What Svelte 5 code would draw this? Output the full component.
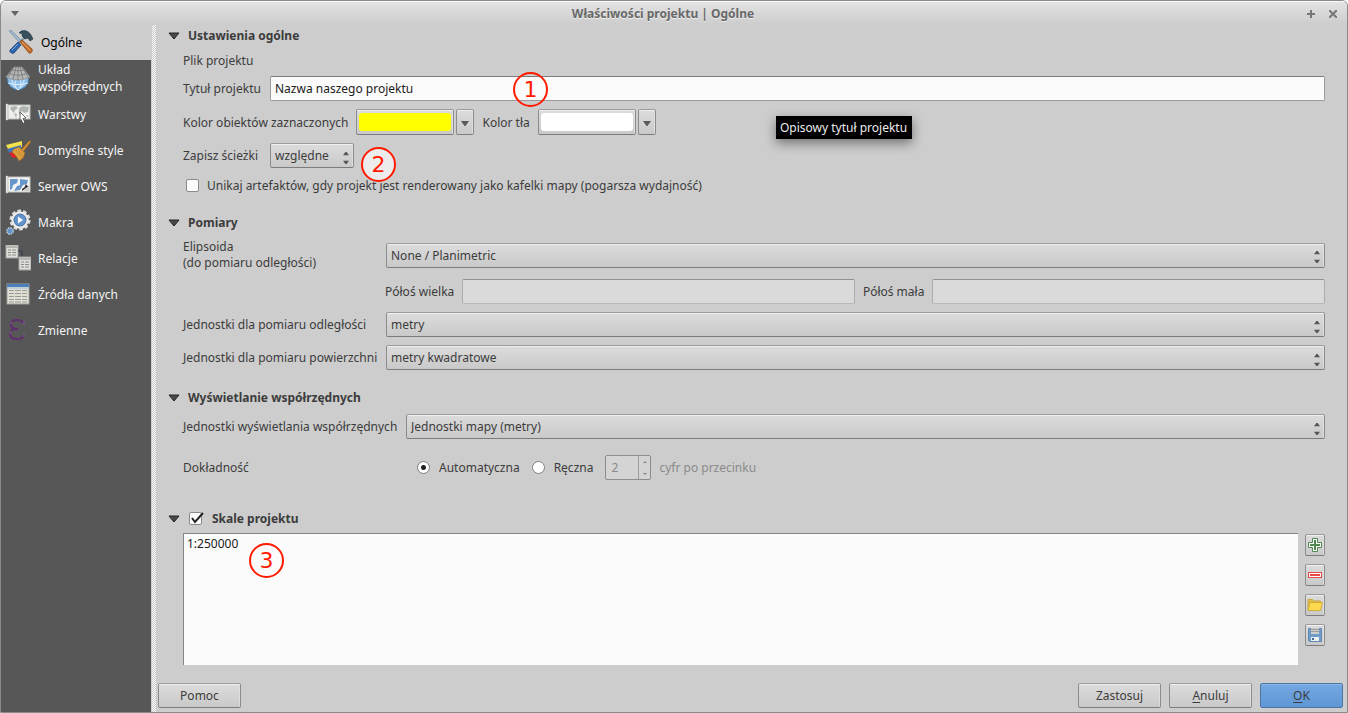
<script lang="ts">
	interface Page {
		id: string;
		label: string;
	}

	const pages: Page[] = [
		{ id: 'general', label: 'Ogólne' },
		{ id: 'crs', label: 'Układ współrzędnych' },
		{ id: 'layers', label: 'Warstwy' },
		{ id: 'styles', label: 'Domyślne style' },
		{ id: 'ows', label: 'Serwer OWS' },
		{ id: 'macros', label: 'Makra' },
		{ id: 'relations', label: 'Relacje' },
		{ id: 'sources', label: 'Źródła danych' },
		{ id: 'variables', label: 'Zmienne' }
	];

	let current = $state('general');
	let title = $state('Nazwa naszego projektu');
	let avoidArtifacts = $state(false);
	let useScales = $state(true);
	let precision = $state('auto');
	let digits = $state('2');
</script>

{#snippet spinArrows()}
	<svg class="spin-arrows" width="6" height="12" viewBox="0 0 6 12" aria-hidden="true">
		<path d="M0 3.300 2.400 0h1.200L6 3.300zM0 8.700h6L3.600 12H2.400z" fill="currentColor" />
	</svg>
{/snippet}

{#snippet downArrow()}
	<svg width="8" height="5" viewBox="0 0 8 5" aria-hidden="true">
		<path d="M0 0h8L4.500 5h-1z" fill="#5b5b5b" />
	</svg>
{/snippet}

{#snippet fold()}
	<svg class="fold" width="12" height="8" viewBox="0 0 12 8" aria-hidden="true">
		<path d="M1 1h10L6 7z" fill="#4a4a4a" stroke="#222" stroke-width="1" stroke-linejoin="round" />
	</svg>
{/snippet}

{#snippet combo(id: string, value: string)}
	<div class="combo">
		<select {id}>
			<option>{value}</option>
		</select>
		{@render spinArrows()}
	</div>
{/snippet}

{#snippet tableSheet(x: number, y: number)}
	<g transform="translate({x} {y})">
		<rect width="12" height="13" fill="#dededa" stroke="#a3a39f" stroke-width="1" />
		<rect x="1" y="1" width="10" height="2" fill="#b5b5b0" />
		<path d="M2 5h3M6 5h4M2 7.500h3M6 7.500h4M2 10h3M6 10h4" stroke="#8b8b86" />
	</g>
{/snippet}

{#snippet pageIcon(id: string)}
	<svg class="page-icon" width="26" height="26" viewBox="0 0 26 26" aria-hidden="true">
		{#if id === 'general'}
			<path d="M1 2 3 1l10 10-2 2z" fill="#9fb8cf" stroke="#6d8296" stroke-width=".6" />
			<path d="M10 15 19 6" stroke="#8a949c" stroke-width="2.400" />
			<path d="M2 21 10 13l3 3-7 8c-2 1-5-1-4-3z" fill="#2f66ad" stroke="#1d447b" stroke-width=".8" />
			<path d="m4 21 6-6" stroke="#80acdf" stroke-width="1" />
			<path d="m12 13 2-2 10 9c1 2-1 5-3 4z" fill="#c3702f" stroke="#8a4717" stroke-width=".8" />
			<path d="m14 13 8 8" stroke="#e9a46a" stroke-width="1" />
			<path d="M11 4c3-4 9-3 12 2l2 4-3 2-2-3-3 1-3-3c1-2-1-3-3-3z" fill="#38505e" stroke="#1f313c" stroke-width=".6" />
		{:else if id === 'crs'}
			<circle cx="13" cy="14" r="10.500" fill="#8dc0ec" stroke="#4b86bd" />
			<path d="M13 13c-4 3-4 8 0 12 4-4 4-9 0-12zM3 18c6 2 14 2 20 0M7 14c0 5 2 8 6 11 4-3 6-6 6-11" fill="none" stroke="#dff0fc" stroke-width="1" />
			<path d="M9 2h8l8 10c-7 4-17 4-24 0z" fill="#b4b5b5" stroke="#8a8c8c" stroke-width=".8" />
			<path d="M7 5c4 1 8 1 12 0M4 8c5 3 13 3 18 0M11 2 8 14M15 2l3 12M13 2v13M9 2 3 12M17 2l6 10" fill="none" stroke="#6e7070" stroke-width=".7" />
		{:else if id === 'layers'}
			<path d="M1 3h2v16H1z" fill="#fff" stroke="#aaa" stroke-width=".5" />
			<rect x="3" y="4" width="22" height="14" fill="#efefed" stroke="#bcbcb8" />
			<path d="m5 6 6-1 2 2-3 2-1 3-3-3zM9 12l3 1-1 4zM14 7l4-2 6 1-1 5-4 1-2-2-3 3zM21 14l3 1-2 1z" fill="#aeb4ae" />
			<path d="m15 11 6 6-3 .5 2 4-2 1-2-4-1 1z" fill="#fff" stroke="#444" stroke-width=".8" />
		{:else if id === 'styles'}
			<path d="m1 8 16-4v6L4 14z" fill="#f4e04a" />
			<path d="m2 12 14-4v6L6 18z" fill="#3f74b8" />
			<path d="m4 16 12-3v6L8 21z" fill="#df2323" />
			<path d="m16 13 8-9c2-1 2 0 1 2l-7 9z" fill="#d89336" stroke="#8b5919" stroke-width=".6" />
			<path d="m9 12 5-2 6 6-2 5-4 3c-2-4-4-7-7-9z" fill="#dda13d" stroke="#a66d22" stroke-width=".7" />
			<path d="m11 13 6 8M13 12l5 7M15 11l4 5" stroke="#b37a2a" stroke-width=".6" />
		{:else if id === 'ows'}
			<path d="M1 3h2v17H1z" fill="#fff" stroke="#aaa" stroke-width=".5" />
			<rect x="3" y="4" width="22" height="15" fill="#f4f4f4" stroke="#c4c4c0" />
			<path d="m5 6 8 0-1 4-4 2-1 4-2 1zM15 6l8 1-1 4-4 1-3 5-6 1 3-5 3-1z" fill="#6797ca" />
			<path d="M17 18c0-3 1-3 2-3l2-4c1 2 2 2 3 2z" fill="#333" />
			<path d="M19 18c1-2 3-3 5-4v4z" fill="#c9c9c9" />
		{:else if id === 'macros'}
			<circle cx="15" cy="11" r="9" fill="none" stroke="#dcdcdc" stroke-width="3" stroke-dasharray="3.500 2.155" />
			<circle cx="15" cy="11" r="7.500" fill="#6493cb" stroke="#ececec" stroke-width="2.400" />
			<circle cx="15" cy="11" r="6" fill="none" stroke="#3f689c" stroke-width=".7" />
			<path d="m13 7.500 5 3.500-5 3.500z" fill="#fff" />
			<circle cx="5" cy="22" r="3.200" fill="#6493cb" stroke="#b9c5d0" stroke-width="1.500" stroke-dasharray="1.600 .9" />
		{:else if id === 'relations'}
			{@render tableSheet(1, 0)}
			<path d="M13 6h4v6" fill="none" stroke="#303c50" />
			{@render tableSheet(14, 12)}
		{:else if id === 'sources'}
			<rect x="2" y="3" width="22" height="20" fill="#dfdfd6" stroke="#a1a19b" />
			<rect x="2" y="3" width="22" height="3" fill="#4c80bd" />
			<path d="M2 7h22" stroke="#9fbbdc" />
			<path d="M4 9.500h5M10 9.500h6M17 9.500h5M4 12.500h5M10 12.500h6M17 12.500h5M4 15.500h5M10 15.500h6M17 15.500h5M4 18.500h5M10 18.500h6M17 18.500h5M4 21h5M10 21h6M17 21h5" stroke="#9a9a92" />
		{:else}
			<path d="M19 7c-1-3-4-4-7-4-4 0-6 2-6 4.500s2 4.500 6 4.500h1M12 12c-4 0-7 2-7 5s3 5 8 5c3 0 5-1 6-4" fill="none" stroke="#5f2f70" stroke-width="2.200" />
			<path d="M19 4v4M19 17v3M7 5 6 7M6 14l-1 3" stroke="#8a6397" stroke-width="1" />
		{/if}
	</svg>
{/snippet}

<div class="dialog">
	<header class="titlebar">
		<button type="button" class="frame-button" aria-label="Menu okna">
			<svg width="8" height="5" viewBox="0 0 8 5"><path d="M0 0h8L4 5z" fill="#666" /></svg>
		</button>
		<h1>Właściwości projektu | Ogólne</h1>
		<button type="button" class="frame-button" aria-label="Maksymalizuj">
			<svg width="8" height="8" viewBox="0 0 8 8"><path d="M4 0v8M0 4h8" stroke="#777" stroke-width="2" /></svg>
		</button>
		<button type="button" class="frame-button" aria-label="Zamknij">
			<svg width="8" height="8" viewBox="0 0 8 8"><path d="m0 0 8 8M8 0 0 8" stroke="#777" stroke-width="2" /></svg>
		</button>
	</header>

	<div class="main">
		<nav class="sidebar">
			{#each pages as page (page.id)}
				<button
					type="button"
					class="page"
					class:active={current === page.id}
					onclick={() => (current = page.id)}
				>
					{@render pageIcon(page.id)}
					<span>{page.label}</span>
				</button>
			{/each}
		</nav>
		<div class="splitter"></div>

		<div class="content">
			<form class="groups" onsubmit={(event) => event.preventDefault()}>
				<section>
					<h2>{@render fold()}Ustawienia ogólne</h2>
					<div class="body">
						<div class="row text-row">Plik projektu</div>
						<div class="row">
							<label class="short" for="title">Tytuł projektu</label>
							<input id="title" class="field" type="text" bind:value={title} />
						</div>
						<div class="row">
							<span>Kolor obiektów zaznaczonych</span>
							<div class="color-picker">
								<button type="button" class="color" aria-label="Kolor obiektów zaznaczonych">
									<span class="swatch yellow"></span>
								</button>
								<button type="button" class="color-menu" aria-label="Menu koloru">
									{@render downArrow()}
								</button>
							</div>
							<span>Kolor tła</span>
							<div class="color-picker">
								<button type="button" class="color" aria-label="Kolor tła">
									<span class="swatch"></span>
								</button>
								<button type="button" class="color-menu" aria-label="Menu koloru tła">
									{@render downArrow()}
								</button>
							</div>
						</div>
						<div class="row paths">
							<label class="short" for="paths">Zapisz ścieżki</label>
							{@render combo('paths', 'względne')}
						</div>
						<label class="row check-row">
							<span class="check">
								<input type="checkbox" bind:checked={avoidArtifacts} />
								{#if avoidArtifacts}{@render tick()}{/if}
							</span>
							Unikaj artefaktów, gdy projekt jest renderowany jako kafelki mapy (pogarsza wydajność)
						</label>
					</div>
				</section>

				<section>
					<h2>{@render fold()}Pomiary</h2>
					<div class="body">
						<div class="row">
							<label class="medium two-line" for="ellipsoid">Elipsoida<br />(do pomiaru odległości)</label>
							{@render combo('ellipsoid', 'None / Planimetric')}
						</div>
						<div class="row axes">
							<label for="semi-major">Półoś wielka</label>
							<input id="semi-major" class="field" type="text" disabled />
							<label for="semi-minor">Półoś mała</label>
							<input id="semi-minor" class="field" type="text" disabled />
						</div>
						<div class="row">
							<label class="medium" for="distance">Jednostki dla pomiaru odległości</label>
							{@render combo('distance', 'metry')}
						</div>
						<div class="row">
							<label class="medium" for="area">Jednostki dla pomiaru powierzchni</label>
							{@render combo('area', 'metry kwadratowe')}
						</div>
					</div>
				</section>

				<section class="coordinates">
					<h2>{@render fold()}Wyświetlanie współrzędnych</h2>
					<div class="body">
						<div class="row">
							<label class="long" for="display">Jednostki wyświetlania współrzędnych</label>
							{@render combo('display', 'Jednostki mapy (metry)')}
						</div>
						<div class="row precision">
							<span class="long">Dokładność</span>
							<label class="radio">
								<input type="radio" name="precision" value="auto" bind:group={precision} />
								Automatyczna
							</label>
							<label class="radio">
								<input type="radio" name="precision" value="manual" bind:group={precision} />
								Ręczna
							</label>
							<div class="spin" class:off={precision === 'auto'}>
								<input
									id="digits"
									type="text"
									inputmode="numeric"
									bind:value={digits}
									disabled={precision === 'auto'}
								/>
								<span class="steps">
									<svg width="4" height="14" viewBox="0 0 4 14" aria-hidden="true">
										<path d="M0 2 2 0l2 2zM0 12h4l-2 2z" fill="currentColor" />
									</svg>
								</span>
							</div>
							<label class="digits" for="digits">cyfr po przecinku</label>
						</div>
					</div>
				</section>

				<section class="scales">
					<h2>
						{@render fold()}
						<label>
							<span class="check">
								<input type="checkbox" bind:checked={useScales} />
								{#if useScales}{@render tick()}{/if}
							</span>
							Skale projektu
						</label>
					</h2>
					<div class="scale-body">
						<ul class="scale-list">
							<li>1:250000</li>
						</ul>
						<div class="tools">
							<button type="button" aria-label="Dodaj skalę">
								<svg width="16" height="16" viewBox="0 0 16 16">
									<path d="M5.500 1.500h5v4h4v5h-4v4h-5v-4h-4v-5h4z" fill="#fff" stroke="#4f8a4f" />
									<path d="M8 3v10M3 8h10" stroke="#4f8a4f" stroke-width="2" />
								</svg>
							</button>
							<button type="button" aria-label="Usuń skalę">
								<svg width="16" height="16" viewBox="0 0 16 16">
									<rect x="1.500" y="5.500" width="13" height="5" fill="#fff" stroke="#e84a4a" />
									<path d="M3 8h10" stroke="#e84a4a" stroke-width="2" />
								</svg>
							</button>
							<button type="button" aria-label="Wczytaj skale">
								<svg width="16" height="16" viewBox="0 0 16 16">
									<path d="M1 13V2.500h4.500l1 1.500h7v3" fill="#e2bd48" stroke="#c8a640" />
									<path d="m1 13.500 2-8h12.500l-2 8z" fill="#fcd94f" stroke="#d3ac38" />
								</svg>
							</button>
							<button type="button" aria-label="Zapisz skale">
								<svg width="16" height="16" viewBox="0 0 16 16">
									<path d="M1.500 1.500h13v13h-12l-1-1z" fill="#6f9bc9" stroke="#6389b3" />
									<rect x="4" y="1" width="8" height="6" fill="#cfcfcf" />
									<path d="M4 2.500h8M4 4.500h8" stroke="#9c9c9c" />
									<rect x="4" y="10" width="8" height="4" fill="#eee" />
									<rect x="5" y="11" width="2" height="2" fill="#456b96" />
								</svg>
							</button>
						</div>
					</div>
				</section>
			</form>

			<footer>
				<button type="button" class="action">Pomoc</button>
				<div class="confirm">
					<button type="button" class="action">Zastosuj</button>
					<button type="button" class="action"><u>A</u>nuluj</button>
					<button type="button" class="action primary"><u>O</u>K</button>
				</div>
			</footer>
		</div>
	</div>

	<div class="tooltip" role="tooltip">Opisowy tytuł projektu</div>
	<span class="marker one">1</span>
	<span class="marker two">2</span>
	<span class="marker three">3</span>
</div>

{#snippet tick()}
	<svg width="15" height="13" viewBox="0 0 15 13" aria-hidden="true">
		<path d="m3 6 3 4L14 1" fill="none" stroke="#222" stroke-width="2" />
	</svg>
{/snippet}

<style>
	:global(body) {
		background: #fff;
	}

	.dialog {
		position: relative;
		display: flex;
		flex-direction: column;
		box-sizing: border-box;
		min-height: 100vh;
		border: 1px solid #8a8a8a;
		border-radius: 6px 6px 0 0;
		overflow: hidden;
		background: #cdcdcd;
		color: #3c3c3c;
		font-family: 'Noto Sans', sans-serif;
		font-size: 12px;
		line-height: 17px;
	}

	.dialog :is(button, input, select) {
		box-sizing: border-box;
		margin: 0;
		color: inherit;
		font: inherit;
	}

	.titlebar {
		display: flex;
		align-items: center;
		gap: 8px;
		box-sizing: border-box;
		height: 23px;
		padding: 2px 7px 0;
		box-shadow: inset 0 1px #fafafa;
		background: linear-gradient(#e4e4e4, #cdcdcd);
	}

	.titlebar h1 {
		flex: 1;
		margin: 0;
		color: #686868;
		font-size: 12px;
		font-weight: 700;
		text-align: center;
		text-shadow: 0 1px #eee;
	}

	.frame-button {
		display: grid;
		place-items: center;
		width: 14px;
		height: 16px;
		padding: 0;
		border: 0;
		background: none;
	}

	.main {
		display: flex;
		flex: 1;
	}

	.sidebar {
		display: flex;
		flex-direction: column;
		width: 150px;
		background: #575757;
	}

	.page {
		display: flex;
		align-items: center;
		gap: 7px;
		height: 36px;
		padding: 0 4px;
		border: 0;
		background: none;
		text-align: left;
	}

	.page span {
		color: #f4f4f4;
	}

	.page.active {
		padding-left: 7px;
		background: #cdcdcd;
	}

	.page.active span {
		color: #000;
	}

	.page-icon {
		flex: none;
	}

	.splitter {
		width: 4px;
		margin: 1px 1px 0;
		background: conic-gradient(#fff 25%, #c6c6c6 0 50%, #fff 0 75%, #c6c6c6 0) 0 0 / 2px 2px;
	}

	.content {
		display: flex;
		flex: 1;
		flex-direction: column;
		gap: 18px;
		min-width: 0;
		padding: 3px 4px 4px 1px;
	}

	.groups {
		display: flex;
		flex: 1;
		flex-direction: column;
		padding: 0 18px 0 10px;
	}

	section + section {
		margin-top: 20px;
	}

	h2 {
		display: flex;
		align-items: center;
		gap: 8px;
		height: 17px;
		margin: 0 0 8px;
		font-size: 12px;
		font-weight: 700;
	}

	h2 label {
		display: flex;
		align-items: center;
		gap: 10px;
		padding-left: 1px;
	}

	.body {
		display: flex;
		flex-direction: column;
		gap: 8px;
		padding-left: 15px;
	}

	section.coordinates {
		margin-top: 19px;
	}

	.coordinates .body {
		gap: 16px;
	}

	.row {
		display: flex;
		align-items: center;
		gap: 8px;
	}

	.text-row {
		height: 16px;
	}

	.short {
		width: 79px;
	}

	.medium {
		width: 195px;
	}

	.long {
		width: 215px;
	}

	.short,
	.medium,
	.long {
		flex: none;
		white-space: nowrap;
	}

	.two-line {
		line-height: 16px;
	}

	.field {
		flex: 1;
		min-width: 0;
		height: 25px;
		padding: 0 4px;
		border: 1px solid #9a9a9a;
		border-top-color: #7c7c7c;
		border-radius: 2px;
		background: #fbfbfb;
	}

	.dialog .field {
		color: #1c1c1c;
	}

	.field:disabled {
		border-color: #929292 #acacac #bababa;
		background: #dadada;
	}

	.combo {
		display: grid;
		flex: 1;
		align-items: center;
	}

	.combo > * {
		grid-area: 1 / 1;
	}

	.combo select,
	.color,
	.color-menu,
	.action,
	.tools button {
		border: 1px solid #8c8c8c;
		border-color: #9c9c9c #8c8c8c #7c7c7c;
		border-radius: 2px;
		box-shadow: inset 0 1px #eee, inset -1px 0 #dedede;
		background: linear-gradient(#dcdcdc, #c9c9c9);
	}

	.combo select {
		width: 100%;
		height: 25px;
		padding: 0 16px 0 4px;
		appearance: none;
	}

	.spin-arrows {
		justify-self: end;
		margin: 4px 5px 0 0;
		color: #555;
		pointer-events: none;
	}

	.paths .combo {
		flex: none;
		width: 84px;
	}

	.color-picker {
		display: flex;
		gap: 2px;
	}

	.color {
		display: flex;
		width: 98px;
		height: 26px;
		padding: 3px 2px;
	}

	.swatch {
		flex: 1;
		align-self: stretch;
		border-radius: 3px;
		background: #fff;
	}

	.swatch.yellow {
		background: #ff0;
	}

	.color-menu {
		display: grid;
		place-items: center;
		width: 18px;
		height: 26px;
		padding: 2px 0 0;
	}

	.check-row {
		height: 18px;
		padding-left: 3px;
	}

	.check {
		position: relative;
		display: flex;
	}

	.check input {
		width: 13px;
		height: 13px;
		border: 1px solid #8a8a8a;
		border-radius: 2px;
		background: #fbfbfb;
		appearance: none;
	}

	.check svg {
		position: absolute;
		top: 0;
		left: 0;
		pointer-events: none;
	}

	.axes {
		padding-left: 202px;
	}

	.radio {
		display: flex;
		align-items: center;
		gap: 9px;
		margin-right: 4px;
	}

	.precision .long {
		width: 226px;
	}

	.radio input {
		width: 13px;
		height: 13px;
		border: 1px solid #808080;
		border-radius: 50%;
		background: #fff;
		appearance: none;
	}

	.radio input:checked {
		background: radial-gradient(circle, #222 2px, #fff 3px);
	}

	.spin {
		display: flex;
		box-sizing: border-box;
		width: 46px;
		height: 25px;
		border: 1px solid #8c8c8c;
		border-radius: 2px;
		background: #fbfbfb;
	}

	.spin input {
		flex: 1;
		min-width: 0;
		padding: 0 5px;
		border: 0;
		background: none;
	}

	.spin.off {
		background: #d4d4d4;
		color: #888;
	}

	.spin.off + .digits {
		color: #8a8a8a;
	}

	.steps {
		display: grid;
		place-items: center;
		width: 11px;
		border-left: 1px solid #9c9c9c;
	}

	section.scales {
		display: flex;
		flex: 1;
		flex-direction: column;
		margin-top: 30px;
	}

	.scales h2 {
		margin-bottom: 6px;
	}

	.scale-body {
		display: flex;
		flex: 1;
		gap: 7px;
		padding-left: 15px;
	}

	.scale-list {
		flex: 1;
		margin: 0;
		padding: 1px 3px;
		border: 1px solid #858585;
		border-width: 1px 0 0 1px;
		background: #fbfbfb;
		color: #1c1c1c;
		list-style: none;
	}

	.tools {
		display: flex;
		flex-direction: column;
		gap: 8px;
		padding-top: 1px;
	}

	.tools button {
		display: grid;
		place-items: center;
		width: 20px;
		height: 22px;
		padding: 0;
	}

	footer {
		display: flex;
		justify-content: space-between;
	}

	.confirm {
		display: flex;
		gap: 8px;
	}

	.action {
		width: 83px;
		height: 25px;
		padding: 0;
	}

	.action u {
		text-underline-offset: 2px;
	}

	.primary {
		border-color: #4c76a5;
		box-shadow: inset 0 1px #8ab5e6;
		background: linear-gradient(#74a7e0, #5f97d6);
	}

	.tooltip {
		position: absolute;
		top: 115px;
		left: 775px;
		padding: 3px 5px 3px 4px;
		background: #000;
		box-shadow: 0 4px 12px rgb(0 0 0 / 45%);
		color: #ececec;
		white-space: nowrap;
	}

	.marker {
		position: absolute;
		display: grid;
		place-items: center;
		box-sizing: border-box;
		width: 35px;
		height: 35px;
		border: 2px solid #ff1a00;
		border-radius: 50%;
		color: #ff1a00;
		font-family: 'DejaVu Sans', sans-serif;
		font-size: 22px;
		line-height: 24px;
		pointer-events: none;
	}

	.one {
		top: 71px;
		left: 512px;
	}

	.two {
		top: 146px;
		left: 360px;
		background: #ececec;
	}

	.three {
		top: 542px;
		left: 248px;
	}
</style>
